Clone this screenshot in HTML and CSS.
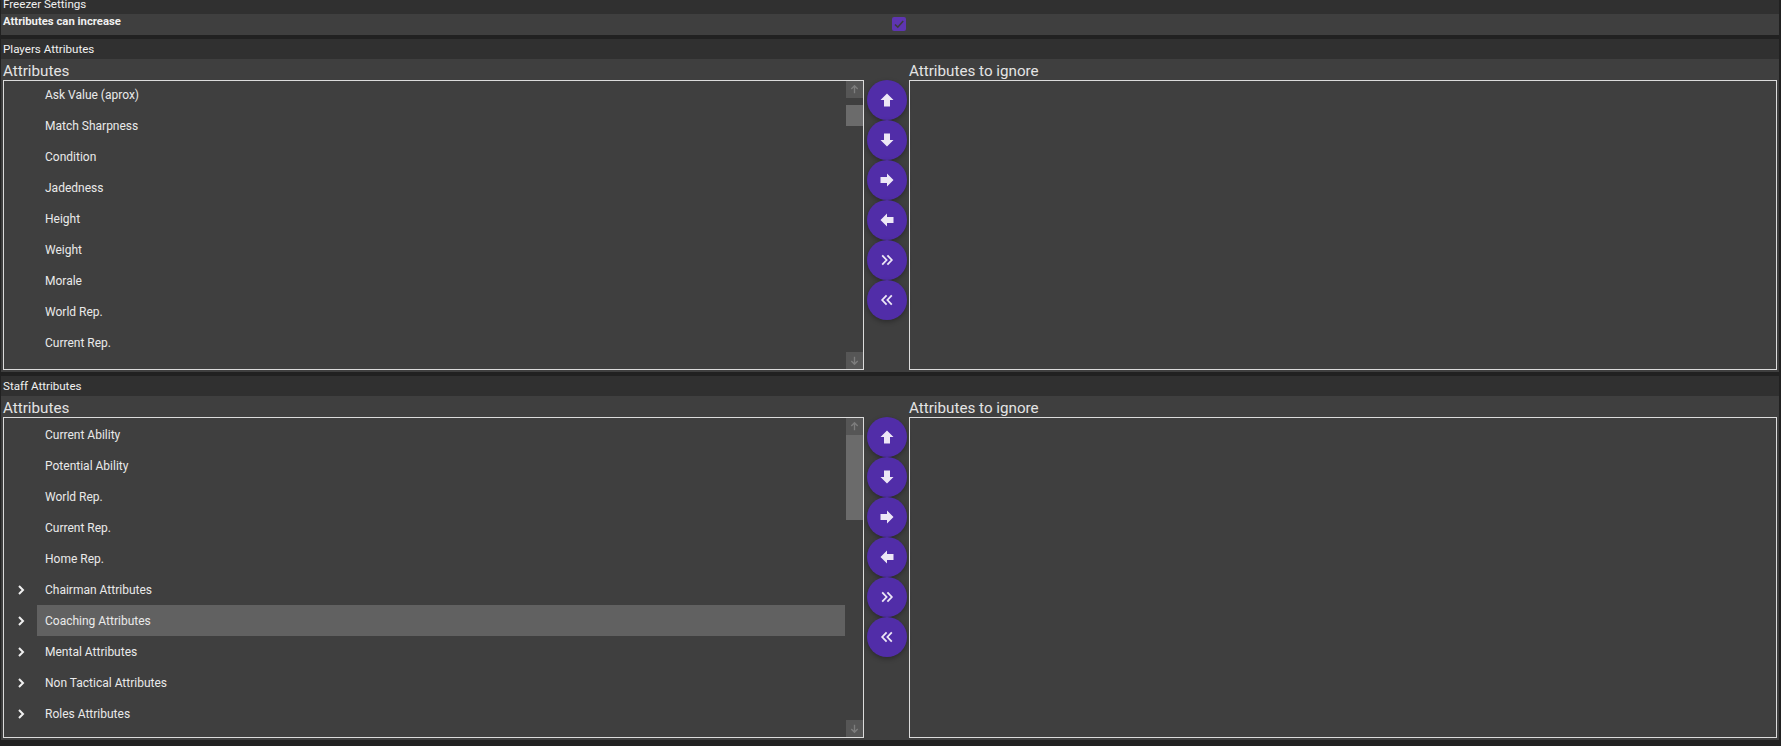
FILE: index.html
```html
<!DOCTYPE html>
<html lang="en">
  <head>
    <meta charset="UTF-8" />
    <title>Freezer Settings</title>
    <link rel="stylesheet" href="styles.css">
  </head>
  <body>
    <svg class="defs" width="0" height="0">
      <symbol id="i-up" viewBox="0 0 16 16"><path d="M8 1.5 14.5 8H11V14.5H5V8H1.5Z" /></symbol>
      <symbol id="i-down" viewBox="0 0 16 16"><path d="M8 14.5 1.5 8H5V1.5H11V8H14.5Z" /></symbol>
      <symbol id="i-right" viewBox="0 0 16 16"><path d="M14.5 8 8 1.5V5H1.5V11H8V14.5Z" /></symbol>
      <symbol id="i-left" viewBox="0 0 16 16"><path d="M1.5 8 8 1.5V5H14.5V11H8V14.5Z" /></symbol>
      <symbol id="i-all-right" viewBox="0 0 16 16"><path class="line" d="M3.2 3.4 7.6 8 3.2 12.6M8.4 3.4 12.8 8 8.4 12.6" /></symbol>
      <symbol id="i-all-left" viewBox="0 0 16 16"><path class="line" d="M12.8 3.4 8.4 8 12.8 12.6M7.6 3.4 3.2 8 7.6 12.6" /></symbol>
    </svg>

    <section class="panel">
      <h2 class="panel-header first">Freezer Settings</h2>
      <div class="option-row">
        <span class="option-label">Attributes can increase</span>
        <span class="checkbox">
          <svg viewBox="0 0 14 14"><path d="M3 7.5 5.8 10.2 11.2 4" /></svg>
        </span>
      </div>
    </section>

    <section class="panel players">
      <h2 class="panel-header">Players Attributes</h2>
      <div class="picker">
        <div class="column">
          <div class="list-title">Attributes</div>
          <div class="list-box">
            <ul class="tree">
              <li class="tree-row"><span class="tree-text">Ask Value (aprox)</span></li>
              <li class="tree-row"><span class="tree-text">Match Sharpness</span></li>
              <li class="tree-row"><span class="tree-text">Condition</span></li>
              <li class="tree-row"><span class="tree-text">Jadedness</span></li>
              <li class="tree-row"><span class="tree-text">Height</span></li>
              <li class="tree-row"><span class="tree-text">Weight</span></li>
              <li class="tree-row"><span class="tree-text">Morale</span></li>
              <li class="tree-row"><span class="tree-text">World Rep.</span></li>
              <li class="tree-row"><span class="tree-text">Current Rep.</span></li>
            </ul>
            <div class="scrollbar">
              <span class="scroll-btn">
                <svg viewBox="0 0 12 12"><path d="M6 10V2M2.5 5.5 6 2l3.5 3.5" /></svg>
              </span>
              <div class="scroll-track"><div class="scroll-thumb small"></div></div>
              <span class="scroll-btn">
                <svg viewBox="0 0 12 12"><path d="M6 2v8M2.5 6.5 6 10l3.5-3.5" /></svg>
              </span>
            </div>
          </div>
        </div>
        <div class="actions">
          <button class="round-btn"><svg><use href="#i-up" /></svg></button>
          <button class="round-btn"><svg><use href="#i-down" /></svg></button>
          <button class="round-btn"><svg><use href="#i-right" /></svg></button>
          <button class="round-btn"><svg><use href="#i-left" /></svg></button>
          <button class="round-btn"><svg><use href="#i-all-right" /></svg></button>
          <button class="round-btn"><svg><use href="#i-all-left" /></svg></button>
        </div>
        <div class="column wide">
          <div class="list-title">Attributes to ignore</div>
          <div class="list-box"></div>
        </div>
      </div>
    </section>

    <section class="panel staff">
      <h2 class="panel-header">Staff Attributes</h2>
      <div class="picker">
        <div class="column">
          <div class="list-title">Attributes</div>
          <div class="list-box">
            <ul class="tree">
              <li class="tree-row"><span class="tree-text">Current Ability</span></li>
              <li class="tree-row"><span class="tree-text">Potential Ability</span></li>
              <li class="tree-row"><span class="tree-text">World Rep.</span></li>
              <li class="tree-row"><span class="tree-text">Current Rep.</span></li>
              <li class="tree-row"><span class="tree-text">Home Rep.</span></li>
              <li class="tree-row"><svg class="chevron" viewBox="0 0 8 10"><path d="M2 1 6 5 2 9" /></svg><span class="tree-text">Chairman Attributes</span></li>
              <li class="tree-row"><svg class="chevron" viewBox="0 0 8 10"><path d="M2 1 6 5 2 9" /></svg><span class="tree-text selected">Coaching Attributes</span></li>
              <li class="tree-row"><svg class="chevron" viewBox="0 0 8 10"><path d="M2 1 6 5 2 9" /></svg><span class="tree-text">Mental Attributes</span></li>
              <li class="tree-row"><svg class="chevron" viewBox="0 0 8 10"><path d="M2 1 6 5 2 9" /></svg><span class="tree-text">Non Tactical Attributes</span></li>
              <li class="tree-row"><svg class="chevron" viewBox="0 0 8 10"><path d="M2 1 6 5 2 9" /></svg><span class="tree-text">Roles Attributes</span></li>
            </ul>
            <div class="scrollbar">
              <span class="scroll-btn">
                <svg viewBox="0 0 12 12"><path d="M6 10V2M2.5 5.5 6 2l3.5 3.5" /></svg>
              </span>
              <div class="scroll-track"><div class="scroll-thumb large"></div></div>
              <span class="scroll-btn">
                <svg viewBox="0 0 12 12"><path d="M6 2v8M2.5 6.5 6 10l3.5-3.5" /></svg>
              </span>
            </div>
          </div>
        </div>
        <div class="actions">
          <button class="round-btn"><svg><use href="#i-up" /></svg></button>
          <button class="round-btn"><svg><use href="#i-down" /></svg></button>
          <button class="round-btn"><svg><use href="#i-right" /></svg></button>
          <button class="round-btn"><svg><use href="#i-left" /></svg></button>
          <button class="round-btn"><svg><use href="#i-all-right" /></svg></button>
          <button class="round-btn"><svg><use href="#i-all-left" /></svg></button>
        </div>
        <div class="column wide">
          <div class="list-title">Attributes to ignore</div>
          <div class="list-box"></div>
        </div>
      </div>
    </section>
  </body>
</html>
```

FILE: styles.css
```css
html,
body {
  height: 100%;
}
body {
  margin: 0;
  padding: 0 2px 0 1px;
  box-sizing: border-box;
  overflow: hidden;
  background: #212121;
  color: #f0f0f0;
  font-family: Roboto, "Noto Sans", sans-serif;
  font-size: 12px;
}
.defs {
  position: absolute;
}
.panel {
  background: #3f3f3f;
  margin-bottom: 4px;
}
.panel-header {
  margin: 0;
  height: 20px;
  padding-left: 2px;
  background: #303030;
  font-size: 11.6px;
  font-weight: 400;
  line-height: 20px;
}
.panel-header.first {
  height: 14px;
  line-height: 9px;
}
.option-row {
  display: flex;
  height: 21px;
}
.option-label {
  width: 891px;
  padding-left: 2px;
  box-sizing: border-box;
  font-size: 11.3px;
  font-weight: 700;
  line-height: 16px;
}
.checkbox {
  width: 14px;
  height: 14px;
  margin-top: 3px;
  border-radius: 2px;
  background: #5e35b1;
}
.checkbox svg {
  display: block;
  fill: none;
  stroke: #3c3c3c;
  stroke-width: 1.6;
}
.picker {
  display: flex;
  padding: 0 2px 2px;
}
.column {
  display: flex;
  flex-direction: column;
  width: 861px;
}
.column.wide {
  width: 868px;
}
.list-title {
  height: 21px;
  font-size: 15.2px;
  line-height: 25px;
  color: #e4e4e4;
}
.list-box {
  display: flex;
  box-sizing: border-box;
  border: 1px solid #dcdcdc;
  overflow: hidden;
}
.players .list-box {
  height: 290px;
}
.staff .list-box {
  height: 321px;
}
.tree {
  flex: 1;
  margin: 0 1px 0 0;
  padding: 0;
  list-style: none;
}
.players .tree {
  margin-top: -2px;
}
.staff .tree {
  margin-top: 1px;
}
.tree-row {
  display: flex;
  align-items: center;
  height: 31px;
  padding-left: 33px;
  position: relative;
}
.tree-text {
  flex: 1;
  height: 31px;
  padding-left: 8px;
  line-height: 32px;
  color: #eaeaea;
}
.tree-text.selected {
  background: #616161;
}
.chevron {
  position: absolute;
  left: 13px;
  top: 11px;
  width: 8px;
  height: 10px;
  fill: none;
  stroke: #f0f0f0;
  stroke-width: 2;
}
.scrollbar {
  display: flex;
  flex-direction: column;
  width: 17px;
}
.scroll-btn {
  display: block;
  height: 17px;
  flex: none;
  background: #565656;
}
.scroll-btn svg {
  display: block;
  width: 11px;
  height: 11px;
  margin: 3px;
  fill: none;
  stroke: #7d7d7d;
  stroke-width: 1.5;
}
.scroll-track {
  flex: 1;
}
.scroll-thumb {
  background: #6b6b6b;
}
.scroll-thumb.small {
  height: 21px;
  margin-top: 7px;
}
.scroll-thumb.large {
  height: 85px;
}
.actions {
  display: flex;
  flex-direction: column;
  width: 45px;
  padding: 21px 0 0 3px;
  box-sizing: border-box;
}
.round-btn {
  width: 40px;
  height: 40px;
  padding: 0;
  border: none;
  border-radius: 50%;
  background: #512da8;
  box-shadow: 0 2px 5px rgba(0, 0, 0, 0.3);
}
.round-btn svg {
  display: block;
  width: 16px;
  height: 16px;
  margin: 12px;
  fill: #ede7f6;
}
.line {
  fill: none;
  stroke: #ede7f6;
  stroke-width: 1.8;
}
```
